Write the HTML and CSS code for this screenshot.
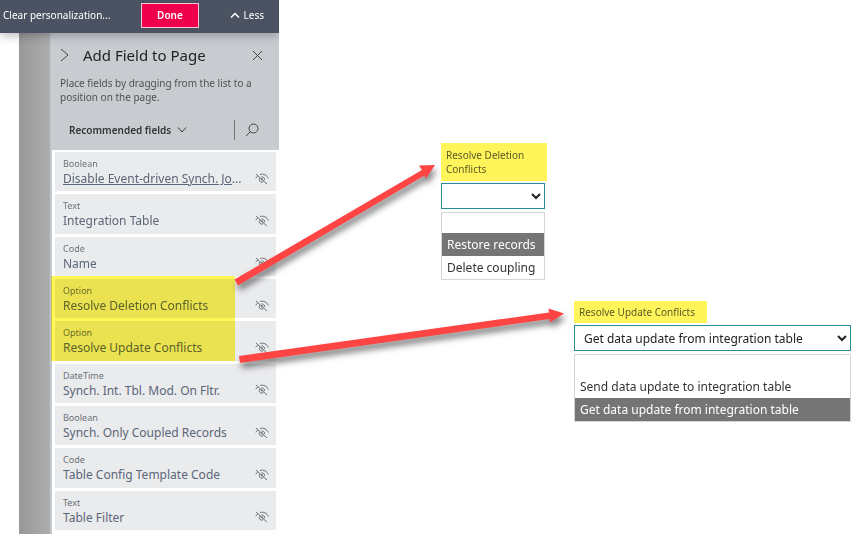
FILE: index.html
```html
<!DOCTYPE html>
<html lang="en">

<head>
    <meta charset="utf-8">
    <title>Add Field to Page</title>
    <link rel="stylesheet" href="styles.css">
</head>

<body>
    <svg class="icon-defs" aria-hidden="true">
        <symbol id="hidden-eye" viewBox="0 0 14 12">
            <path d="M1 1l11 10M.8 5.300c.6-1.300 1.400-2.100 2.400-2.700M5 1.500c3.700-1 7 .6 8.300 4M5 5A2.400 2.400 0 0 0 8.400 8.400M6.400 4A2.500 2.500 0 0 1 9.500 7" />
            <circle cx="7" cy="6.300" r=".7" />
        </symbol>
    </svg>

    <div class="sidebar">
        <div class="toolbar">
            <button class="toolbar-link">Clear personalization...</button>
            <button class="done-button">Done</button>
            <button class="toolbar-link less-button">
                <svg width="10" height="8" viewBox="0 0 10 8"><path d="M1 6.500l4-4 4 4" /></svg>
                Less
            </button>
        </div>

        <div class="panel-row">
            <div class="page-edge"></div>
            <div class="panel">
                <div class="panel-header">
                    <div class="title-row">
                        <button class="icon-button" aria-label="Collapse">
                            <svg width="9" height="14" viewBox="0 0 9 14"><path d="M1 1l7 6-7 6" /></svg>
                        </button>
                        <h1>Add Field to Page</h1>
                        <button class="icon-button" aria-label="Close">
                            <svg width="11" height="11" viewBox="0 0 11 11"><path d="M1 1l9 9M10 1l-9 9" /></svg>
                        </button>
                    </div>
                    <p>Place fields by dragging from the list to a position on the page.</p>
                    <div class="filter-row">
                        <button class="filter-button">
                            Recommended fields
                            <svg width="10" height="6" viewBox="0 0 10 6"><path d="M1 .5l4 4.500 4-4.500" /></svg>
                        </button>
                        <button class="icon-button search-button" aria-label="Search">
                            <svg width="14" height="14" viewBox="0 0 14 14"><circle cx="8.500" cy="5.500" r="4.500" /><path d="M5.300 8.700L1 13" /></svg>
                        </button>
                    </div>
                </div>

                <ul class="field-list">
                    <li>
                        <div class="field-text"><span>Boolean</span><strong><a href="#">Disable Event-driven Synch. Jo</a>...</strong></div>
                        <svg class="eye"><use href="#hidden-eye" /></svg>
                    </li>
                    <li>
                        <div class="field-text"><span>Text</span><strong>Integration Table</strong></div>
                        <svg class="eye"><use href="#hidden-eye" /></svg>
                    </li>
                    <li>
                        <div class="field-text"><span>Code</span><strong>Name</strong></div>
                        <svg class="eye"><use href="#hidden-eye" /></svg>
                    </li>
                    <li class="marked">
                        <div class="field-text"><span>Option</span><strong>Resolve Deletion Conflicts</strong></div>
                        <svg class="eye"><use href="#hidden-eye" /></svg>
                    </li>
                    <li class="marked">
                        <div class="field-text"><span>Option</span><strong>Resolve Update Conflicts</strong></div>
                        <svg class="eye"><use href="#hidden-eye" /></svg>
                    </li>
                    <li>
                        <div class="field-text"><span>DateTime</span><strong>Synch. Int. Tbl. Mod. On Fltr.</strong></div>
                        <svg class="eye"><use href="#hidden-eye" /></svg>
                    </li>
                    <li>
                        <div class="field-text"><span>Boolean</span><strong>Synch. Only Coupled Records</strong></div>
                        <svg class="eye"><use href="#hidden-eye" /></svg>
                    </li>
                    <li>
                        <div class="field-text"><span>Code</span><strong>Table Config Template Code</strong></div>
                        <svg class="eye"><use href="#hidden-eye" /></svg>
                    </li>
                    <li>
                        <div class="field-text"><span>Text</span><strong>Table Filter</strong></div>
                        <svg class="eye"><use href="#hidden-eye" /></svg>
                    </li>
                </ul>
            </div>
        </div>
    </div>

    <main>
        <div class="callout deletion">
            <label for="deletion">Resolve Deletion Conflicts</label>
            <select id="deletion">
                <option selected></option>
                <option>Restore records</option>
                <option>Delete coupling</option>
            </select>
            <ul class="options">
                <li></li>
                <li class="active">Restore records</li>
                <li>Delete coupling</li>
            </ul>
        </div>

        <div class="callout update">
            <label for="update">Resolve Update Conflicts</label>
            <select id="update">
                <option></option>
                <option>Send data update to integration table</option>
                <option selected>Get data update from integration table</option>
            </select>
            <ul class="options">
                <li></li>
                <li>Send data update to integration table</li>
                <li class="active">Get data update from integration table</li>
            </ul>
        </div>
    </main>

    <!-- arrows from the marked fields to their options -->
    <svg class="arrows" width="852" height="538" viewBox="0 0 852 538" aria-hidden="true">
        <path d="M234.500 279.500L422 170 419 165.500 435 165 426 178.500 424.500 175.500 238 285.500z" />
        <path d="M239 356L549 312.500 548.500 308.500 564 313.500 550 322.500 549.500 319 240 363z" />
    </svg>
</body>

</html>
```

FILE: styles.css
```css
* {
    box-sizing: border-box;
}

body {
    font-family: "Segoe UI", "Noto Sans", sans-serif;
    font-size: 12px;
    margin: 0;
    min-height: 100vh;
    display: flex;
    position: relative;
    background-color: white;
    color: #333;
}

button {
    font: inherit;
    color: inherit;
    background: none;
    border: none;
    padding: 0;
    cursor: pointer;
}

ul {
    list-style: none;
    margin: 0;
    padding: 0;
}

svg {
    fill: none;
    stroke: currentColor;
}

.icon-defs {
    position: absolute;
    width: 0;
    height: 0;
}

.sidebar {
    flex: 0 0 279px;
    min-width: 0;
    display: flex;
    flex-direction: column;
    padding-bottom: 4px;
}

.toolbar {
    height: 33px;
    padding: 0 15px 3px 3px;
    display: flex;
    align-items: center;
    justify-content: space-between;
    background-color: #4b5362;
    color: white;
    font-size: 10px;
    box-shadow: 0 2px 10px rgba(0, 0, 0, 0.3);
    clip-path: inset(0 0 -14px 0);
    z-index: 1;
}

.done-button {
    width: 58px;
    height: 25px;
    background-color: #f0004c;
    border: 1px solid #f4c3d1;
    font-weight: 600;
}

.less-button {
    display: flex;
    align-items: center;
    gap: 4px;
}

.less-button svg {
    stroke-width: 1.5;
}

.panel-row {
    flex: 1;
    display: flex;
    margin-left: 19px;
}

.page-edge {
    flex: 0 0 31px;
    background: linear-gradient(to right, #989898, #adadad);
}

.panel {
    flex: 1;
    min-width: 0;
    display: flex;
    flex-direction: column;
    border-left: 2px solid #c2c9d1;
    background-color: #c8ccd1;
}

.panel-header {
    height: 117px;
    padding: 11px 16px 0 8px;
}

.title-row {
    display: flex;
    align-items: center;
    color: #444;
}

h1 {
    flex: 1;
    margin: 0 0 0 14px;
    font-size: 15px;
    line-height: 22px;
    font-weight: 400;
    color: #222;
}

.icon-button {
    display: flex;
}

.panel-header p {
    margin: 10px 0 0;
    font-size: 10px;
    line-height: 14px;
    color: #505050;
}

.filter-row {
    display: flex;
    align-items: center;
    justify-content: space-between;
    margin-top: 16px;
    padding: 0 4px 0 9px;
}

.filter-button {
    font-size: 10px;
    font-weight: 600;
    display: flex;
    align-items: center;
    gap: 6px;
}

.search-button {
    border-left: 1px solid #777;
    padding: 3px 0 3px 10px;
    color: #444;
}

.field-list {
    flex: 1;
    display: grid;
    grid-template-columns: minmax(0, 1fr);
    grid-auto-rows: 1fr;
    gap: 3px;
    padding: 2px 3px 4px;
    background-color: white;
}

.field-list li {
    position: relative;
    display: flex;
    align-items: center;
    padding: 2px 7px 0 8px;
    background-color: #eaebed;
}

.field-text {
    flex: 1;
    color: #5b6678;
}

.field-text span {
    display: block;
    font-size: 9px;
    line-height: 12px;
    color: #6c7078;
}

.field-text strong {
    display: block;
    font-size: 12px;
    line-height: 17px;
    font-weight: 400;
    white-space: nowrap;
}

.field-text a {
    color: inherit;
}

.eye {
    flex: 0 0 14px;
    height: 12px;
    margin-top: 12px;
    color: #6c727a;
}

.marked::after {
    content: "";
    position: absolute;
    top: -3px;
    right: 41px;
    bottom: 0;
    left: -4px;
    background-color: #fff657;
    mix-blend-mode: multiply;
}

main {
    flex: 1;
    min-width: 0;
    display: flex;
    flex-direction: column;
    padding: 143px 1px 0 0;
}

.callout {
    display: flex;
    flex-direction: column;
}

.callout label {
    align-self: flex-start;
    padding: 5px;
    font-size: 10px;
    line-height: 14px;
    background-color: #fff55a;
    color: #5c5a28;
}

.callout select {
    height: 26px;
    margin-top: 2px;
    padding: 0 0 0 5px;
    font: inherit;
    color: #222;
    background-color: white;
    border: 1px solid #2a8c92;
    border-radius: 0;
}

.options {
    margin-top: 3px;
    border: 1px solid #d5d5d5;
}

.options li {
    height: 23px;
    padding: 0 5px;
    line-height: 23px;
    white-space: nowrap;
}

.options li:first-child {
    height: 20px;
}

.options .active {
    background-color: #757575;
    color: white;
}

.deletion {
    width: 104px;
    margin-left: 162px;
}

.deletion label {
    width: 106px;
}

.update {
    width: 277px;
    margin-top: 21px;
    align-self: flex-end;
}

.update label {
    width: 133px;
    padding: 4px 5px;
    white-space: nowrap;
}

.arrows {
    position: absolute;
    top: 0;
    left: 0;
    z-index: 2;
    fill: #ff4444;
    stroke: none;
    filter: drop-shadow(2px 5px 3px rgba(0, 0, 0, 0.5));
    pointer-events: none;
}
```
